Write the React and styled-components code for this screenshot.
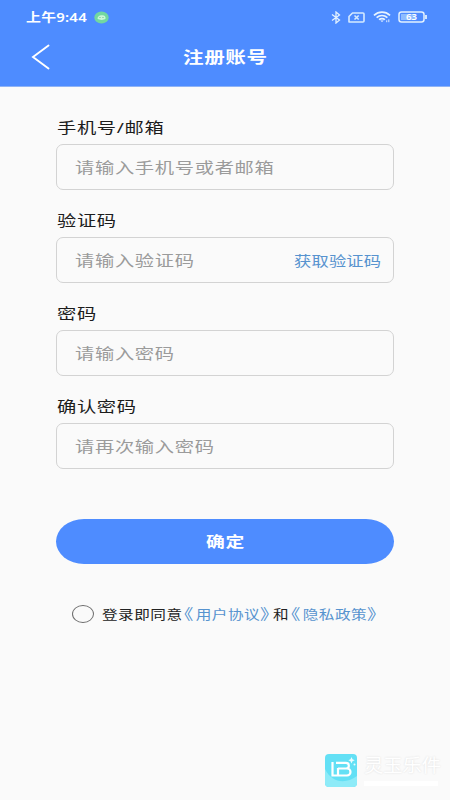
import React, { useState } from 'react';
import styled, { createGlobalStyle } from 'styled-components';

const GlobalStyle = createGlobalStyle`
  * {
    box-sizing: border-box;
  }

  body {
    margin: 0;
    background: #fafafa;
    font-family: 'Noto Sans', 'Noto Sans CJK SC', sans-serif;
  }
`;

const Screen = styled.div`
  width: 450px;
  height: 800px;
  display: flex;
  flex-direction: column;
  background: #fafafa;
  overflow: hidden;
`;

const Header = styled.header`
  height: 87px;
  background: #4e8cff;
  border-bottom: 1px solid #8fb3f5;
  color: #fff;
`;

const StatusBar = styled.div`
  height: 34px;
  padding: 0 22px 0 26px;
  display: flex;
  align-items: center;
  justify-content: space-between;
`;

const StatusGroup = styled.div`
  display: flex;
  align-items: center;
  gap: ${({ $gap }) => $gap}px;
`;

/* Wide lettering: a box of fixed width whose text is stretched sideways */
const TextBox = styled.span`
  display: block;
  flex: none;
  width: ${({ $width }) => $width}px;
  line-height: 24px;
  text-align: left;
  white-space: nowrap;
`;

const Stretched = styled.span`
  display: inline-block;
  transform: scaleX(${({ $scale }) => $scale});
  transform-origin: left center;
  font-size: ${({ $size }) => $size}px;
  font-weight: ${({ $weight }) => $weight || 400};
  letter-spacing: ${({ $spacing }) => $spacing || 0}px;
  color: ${({ $color }) => $color || 'inherit'};
`;

const WideText = ({ width, scale = 1.27, size = 15.2, spacing = 0.48, weight, color, children }) => (
  <TextBox $width={width}>
    <Stretched $scale={scale} $size={size} $spacing={spacing} $weight={weight} $color={color}>
      {children}
    </Stretched>
  </TextBox>
);

const TitleBar = styled.div`
  height: 52px;
  padding: 0 30px 6px;
  display: grid;
  grid-template-columns: 40px 1fr 40px;
  align-items: center;
  justify-items: center;
`;

const BackButton = styled.button`
  justify-self: start;
  display: flex;
  padding: 0;
  border: none;
  background: none;
  color: inherit;
`;

const Form = styled.form`
  padding: 28px 56px 0;
  display: flex;
  flex-direction: column;
`;

const Field = styled.label`
  height: 93px;
  display: flex;
  flex-direction: column;
`;

const Label = styled.div`
  height: 29px;
  padding-left: 1px;
`;

const InputBox = styled.div`
  height: 46px;
  padding: 0 12px 0 18px;
  display: flex;
  align-items: center;
  justify-content: space-between;
  border: 1px solid #d3d3d3;
  border-radius: 7px;
`;

const SubmitButton = styled.button`
  height: 45px;
  margin-top: 31.5px;
  padding: 1px 0 0;
  display: flex;
  align-items: center;
  justify-content: center;
  border: none;
  border-radius: 28px / 22.5px;
  background: #4e8cff;
  color: #fff;
  font-family: inherit;
`;

const Agreement = styled.div`
  display: flex;
  align-items: center;
  margin: 37.5px 0 0 16px;
`;

const Radio = styled.span`
  width: 22px;
  height: 18px;
  margin-right: 8px;
  border: 1.5px solid #6c6c6c;
  border-radius: 50%;
  background: ${({ $checked }) => ($checked ? '#4e8cff' : 'transparent')};
`;

/* Half-width title marks round a document's name */
const Mark = styled.span`
  font-size: 15px;
  line-height: 1;
  vertical-align: -1px;
  font-feature-settings: 'halt';
  letter-spacing: ${({ $open }) => ($open ? 2 : 0)}px;
`;

const DocLink = ({ width, children }) => (
  <WideText width={width} size={12.6} scale={1.24} spacing={0.35} color="#5793cf">
    <Mark $open>《</Mark>
    {children}
    <Mark>》</Mark>
  </WideText>
);

const Watermark = styled.div`
  margin: auto 0 0 324px;
  height: 47px;
  display: flex;
  align-items: flex-start;
  gap: 6px;
`;

const WatermarkText = styled.div`
  color: #fff;
  text-shadow: 0 0 2px #dcdcdc;
`;

const WatermarkLine = styled.div`
  width: 74px;
  height: 5px;
  margin-top: 3px;
  background: #fff;
`;

const BluetoothIcon = () => (
  <svg width="10" height="13" viewBox="0 0 10 13" fill="none" stroke="#e2f1ff" strokeWidth="1.3">
    <path d="M1 3.5l7.5 5.5L5 12V1l3.5 3L1 9.5" />
  </svg>
);

const SimIcon = () => (
  <svg width="17" height="11" viewBox="0 0 17 11" fill="none" stroke="#d5eaff" strokeWidth="1.6">
    <path d="M4.5 1H15a1 1 0 0 1 1 1v7a1 1 0 0 1-1 1H1V4.5z" strokeLinejoin="round" />
    <path d="M6.5 3.5l4.2 4M10.7 3.5l-4.2 4" />
  </svg>
);

const WifiIcon = () => (
  <svg width="18" height="12" viewBox="0 0 19 12" fill="none" stroke="#e8f4ff" strokeWidth="1.8">
    <path d="M1 4.2C6-.2 13-.2 18 4.2M3.8 6.6c3.4-2.8 8-2.8 11.4 0M6.4 8.8c1.8-1.4 4.4-1.4 6.2 0" />
    <path d="M7.6 9.7h3.8L9.5 11.4z" fill="#e8f4ff" stroke="none" />
    <path d="M14.5 11.5v-2M16.7 11.5v-3" strokeWidth="1" />
  </svg>
);

const BatteryIcon = () => (
  <svg width="30" height="12" viewBox="0 0 30 12">
    <rect x="1" y="1" width="25" height="10" rx="2.5" fill="none" stroke="#e2f1ff" strokeWidth="1.5" />
    <rect x="3" y="3" width="14" height="6" fill="#8dbcff" />
    <path d="M28 4v4" stroke="#e2f1ff" strokeWidth="1.8" />
    <text x="13.5" y="9" textAnchor="middle" fontSize="8" fontWeight="600" fill="#fff" textLength="11" lengthAdjust="spacingAndGlyphs">
      63
    </text>
  </svg>
);

const ChatBadge = () => (
  <svg width="15" height="13" viewBox="0 0 15 13">
    <ellipse cx="7.5" cy="6.5" rx="7.2" ry="6" fill="#72d8a0" />
    <path d="M3.5 7.8C3.5 5 6 3.8 8 4.3c2.5-.3 4 1.4 3.5 3.5-1.5 1.5-6 1.5-8 0z" fill="#c9f8d8" />
    <path d="M5.5 6.5h1M8.5 6.5h1" stroke="#64bd8a" />
  </svg>
);

const BackIcon = () => (
  <svg width="20" height="26" viewBox="0 0 20 26" fill="none" stroke="#fff" strokeWidth="1.9" strokeLinecap="round">
    <path d="M18.5 1.5L3 13l15.5 11.5" />
  </svg>
);

const AppLogo = () => (
  <svg width="34" height="34" viewBox="0 0 34 34">
    <rect x="1" y="1" width="32" height="33" rx="4" fill="#63e0f5" />
    <path d="M1 16c6 13 20 16 32 7v7a4 4 0 0 1-4 4H5a4 4 0 0 1-4-4z" fill="#8eebf8" />
    <path
      d="M8.5 9v13.5H23a3.5 3.5 0 0 0 0-7h-9M12 9.8h10a2.8 2.8 0 0 1 0 5.7M14 15v7"
      fill="none"
      stroke="#fff"
      strokeWidth="2.2"
    />
    <path d="M27.5 4l1 2.2 2.2 1-2.2 1-1 2.2-1-2.2-2.2-1 2.2-1z" fill="#e9fdff" />
    <circle cx="30.5" cy="11.5" r="1" fill="#e9fdff" />
  </svg>
);

const FIELDS = [
  { label: '手机号/邮箱', hint: '请输入手机号或者邮箱' },
  { label: '验证码', hint: '请输入验证码', action: '获取验证码' },
  { label: '密码', hint: '请输入密码' },
  { label: '确认密码', hint: '请再次输入密码' },
];

const App = () => {
  const [agreed, setAgreed] = useState(false);

  return (
    <Screen>
      <GlobalStyle />
      <Header>
        <StatusBar>
          <StatusGroup $gap={7}>
            <WideText width={61} size={12} scale={1.24} spacing={0.2} weight={600}>上午9:44</WideText>
            <ChatBadge />
          </StatusGroup>
          <StatusGroup $gap={7.5}>
            <BluetoothIcon />
            <SimIcon />
            <WifiIcon />
            <BatteryIcon />
          </StatusGroup>
        </StatusBar>
        <TitleBar>
          <BackButton type="button" aria-label="返回">
            <BackIcon />
          </BackButton>
          <WideText width={84} size={16.2} spacing={0.45} weight={600}>注册账号</WideText>
        </TitleBar>
      </Header>

      <Form>
        {FIELDS.map(({ label, hint, action }) => (
          <Field key={label}>
            <Label>
              <WideText width={110} color="#1c1c1c">{label}</WideText>
            </Label>
            <InputBox>
              <WideText width={200} spacing={0.52} color="#9b9b9b">{hint}</WideText>
              {action && (
                <WideText width={87} size={13.6} spacing={0.15} color="#5793cf">{action}</WideText>
              )}
            </InputBox>
          </Field>
        ))}
        <SubmitButton type="button">
          <WideText width={39} size={14.8} weight={600}>确定</WideText>
        </SubmitButton>
        <Agreement onClick={() => setAgreed(!agreed)}>
          <Radio $checked={agreed} />
          <WideText width={82} size={12.6} scale={1.24} spacing={0.4} color="#222">登录即同意</WideText>
          <DocLink width={89}>用户协议</DocLink>
          <WideText width={18} size={12.6} scale={1.24} spacing={0} color="#222">和</WideText>
          <DocLink width={87}>隐私政策</DocLink>
        </Agreement>
      </Form>

      <Watermark>
        <AppLogo />
        <WatermarkText>
          <WideText width={80} size={18} spacing={0} scale={1.07}>灵玉乐件</WideText>
          <WatermarkLine />
        </WatermarkText>
      </Watermark>
    </Screen>
  );
};

export default App;
